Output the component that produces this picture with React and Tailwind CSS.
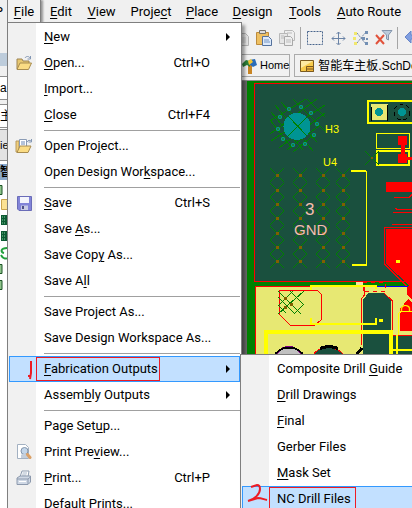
import { Fragment } from 'react';
import clsx from 'clsx';

const MENU_BAR = [
  { label: 'File', key: 0, width: 'w-[34px]', open: true },
  { label: 'Edit', key: 0, width: 'w-[40px]' },
  { label: 'View', key: 0, width: 'w-[41px]' },
  { label: 'Project', key: 5, width: 'w-[58px]' },
  { label: 'Place', key: 0, width: 'w-[44px]' },
  { label: 'Design', key: 0, width: 'w-[57px]' },
  { label: 'Tools', key: 0, width: 'w-[48px]' },
  { label: 'Auto Route', key: 0, width: 'w-[80px]' },
];

const FILE_MENU = [
  [
    { label: 'New', key: 0, submenu: true },
    { label: 'Open...', key: 0, shortcut: 'Ctrl+O', icon: 'open' },
    { label: 'Import...', key: 0 },
    { label: 'Close', key: 0, shortcut: 'Ctrl+F4' },
  ],
  [
    { label: 'Open Project...', key: 8, icon: 'openProject' },
    { label: 'Open Design Workspace...', key: 15 },
  ],
  [
    { label: 'Save', key: 0, shortcut: 'Ctrl+S', icon: 'save' },
    { label: 'Save As...', key: 5 },
    { label: 'Save Copy As...', key: 8 },
    { label: 'Save All', key: 6 },
  ],
  [
    { label: 'Save Project As...' },
    { label: 'Save Design Workspace As...' },
  ],
  [
    { label: 'Fabrication Outputs', key: 0, submenu: true, active: true, mark: 1 },
    { label: 'Assembly Outputs', key: 5, submenu: true },
  ],
  [
    { label: 'Page Setup...', key: 8 },
    { label: 'Print Preview...', key: 9, icon: 'preview' },
    { label: 'Print...', key: 0, shortcut: 'Ctrl+P', icon: 'print' },
    { label: 'Default Prints...' },
  ],
];

const FABRICATION_MENU = [
  [
    { label: 'Composite Drill Guide', key: 16 },
    { label: 'Drill Drawings', key: 0 },
    { label: 'Final', key: 0 },
    { label: 'Gerber Files' },
    { label: 'Mask Set', key: 0 },
    { label: 'NC Drill Files', active: true, mark: 2 },
  ],
];

function Label({ text, index }) {
  if (index === undefined) return <span>{text}</span>;
  return (
    <span>
      {text.slice(0, index)}
      <span className="underline underline-offset-2">{text[index]}</span>
      {text.slice(index + 1)}
    </span>
  );
}

const menuIcons = {
  open: (
    <svg width="16" height="16" viewBox="0 0 16 16">
      <path d="M1 14V4h5l1 2h6v3" fill="#e8c871" stroke="#9c8352" />
      <path d="M1 14.5 4 8h11.5l-3 6.5z" fill="#fbdc84" stroke="#a88c50" />
      <path d="M9 3c1-2 4-2 5 0M14.500 1v3h-3" fill="none" stroke="#8296b4" />
    </svg>
  ),
  openProject: (
    <svg width="18" height="16" viewBox="0 0 18 16">
      <path d="M1 14V3h3v11z" fill="#f0cf7d" stroke="#b89a5d" />
      <path d="M4.500 1.500h7v9h-7z" fill="#fff" stroke="#8a9bb5" />
      <path d="M6 4h4M6 6h4" stroke="#6b87b5" />
      <path d="M2 14.500 5 8h11l-3 6.500z" fill="#fbdc84" stroke="#a88c50" />
      <path d="M12 4c1-2 3-2 4-1M16.500 1v3h-3" fill="none" stroke="#8296b4" />
    </svg>
  ),
  save: (
    <svg width="15" height="15" viewBox="0 0 15 15">
      <path d="M.5.5h14v14H2l-1.500-1.500z" fill="#8284d8" stroke="#6a6cb8" />
      <path d="M3 1h9v6H3z" fill="#f4f5fc" />
      <path d="M4 9.500h7V14H4z" fill="#c9cce4" />
      <path d="M5 10h2v3H5z" fill="#4d4f86" />
    </svg>
  ),
  preview: (
    <svg width="16" height="16" viewBox="0 0 16 16">
      <path d="M1.500.5h8l3 3v11h-11z" fill="#fff" stroke="#a3b1c2" />
      <circle cx="8.500" cy="7" r="3.500" fill="#c3d6ea" stroke="#8294ab" />
      <path d="M5 11c2-2 6-2 7 0v3H5z" fill="#c4cedb" />
      <path d="m11.500 10.500 2.500 3" stroke="#dba066" strokeWidth="3" strokeLinecap="round" />
    </svg>
  ),
  print: (
    <svg width="16" height="16" viewBox="0 0 16 16">
      <path d="m4 7 2-6h7l-1 6z" fill="#fff" stroke="#8d9cb0" />
      <path d="M6.500 3h4.500M6 5h4.500" stroke="#a9b7c9" />
      <path d="m1 8 3-2h10.500v6L12 14.500H1z" fill="#cfd8e5" stroke="#8c99ad" />
      <path d="M1 9h11l2.500-2M12 9v5" fill="none" stroke="#8c99ad" />
      <path d="M3 11.500h7" stroke="#fff" />
    </svg>
  ),
};

// Red pen digits drawn beside the two steps
function PenMark({ step }) {
  if (step === 1) {
    return (
      <svg width="8" height="20" viewBox="0 0 8 20" fill="none" stroke="#ed1c24" strokeWidth="2">
        <path d="M5 1v12l-1 6M2 16h3" />
      </svg>
    );
  }
  return (
    <svg width="22" height="20" viewBox="0 0 22 20" fill="none" stroke="#ed1c24" strokeWidth="2">
      <path d="M4 3l6-2c2 0 3 1 3 4 0 5-5 10-12 12l10-3c3 0 5 1 9 2" />
    </svg>
  );
}

function MenuRow({ item }) {
  return (
    <li role="none">
      <button
        type="button"
        role="menuitem"
        className={clsx(
          'relative flex h-[26px] w-full items-center border text-left whitespace-nowrap',
          item.active ? 'border-[#3399ff] bg-[#c2e0ff]' : 'border-transparent'
        )}
      >
        <span className="flex w-[26px] shrink-0 justify-center pl-[2px]">
          {item.icon && menuIcons[item.icon]}
        </span>
        <span
          className={clsx(
            'flex h-6 items-center border pl-[7px]',
            item.mark ? 'border-[#ed1c24]' : 'border-transparent',
            item.mark === 2 ? 'pr-1' : 'pr-px'
          )}
        >
          <Label text={item.label} index={item.key} />
        </span>
        {item.shortcut && <span className="ml-auto pr-[29px]">{item.shortcut}</span>}
        {item.submenu && (
          <svg className="mr-2 ml-auto" width="5" height="8" viewBox="0 0 5 8">
            <path d="M0 0v8l4-4z" />
          </svg>
        )}
        {item.mark && (
          <span className={clsx('absolute', item.mark === 1 ? 'top-[3px] left-4' : '-top-[3px] left-1')}>
            <PenMark step={item.mark} />
          </span>
        )}
      </button>
    </li>
  );
}

function Menu({ groups, label, className }) {
  return (
    <ul
      role="menu"
      aria-label={label}
      className={clsx(
        'absolute border border-[#7f7f7f] bg-[linear-gradient(to_right,#f1f1f1_28px,#ffffff_28px)] p-px shadow-[3px_3px_3px_#00000060]',
        className
      )}
    >
      {groups.map((group, i) => (
        <Fragment key={i}>
          {i > 0 && <li role="separator" className="my-[2px] ml-[35px] h-px bg-[#a0a0a0]" />}
          {group.map((item) => (
            <MenuRow key={item.label} item={item} />
          ))}
        </Fragment>
      ))}
    </ul>
  );
}

function ToolButton({ label, children }) {
  return (
    <button type="button" aria-label={label} className="flex h-6 w-[23px] shrink-0 items-center justify-center">
      <svg width="18" height="18" viewBox="0 0 18 18" fill="none">
        {children}
      </svg>
    </button>
  );
}

function Toolbar() {
  return (
    <div className="flex h-[30px] shrink-0 items-center overflow-hidden pl-1">
      <ToolButton label="Save">
        <path d="M.5 2.500h14v13H.5z" fill="#b4b6ec" stroke="#a3a5e0" />
      </ToolButton>
      <span className="w-[202px] shrink-0" />
      <ToolButton label="Copy">
        <path d="M7.500 4.500h6l3 3v9h-9z" fill="#e4e4e4" stroke="#b4b4b4" />
        <path d="M10 9h4M10 11h4M10 13h4" stroke="#c4c4c4" />
      </ToolButton>
      <ToolButton label="Paste">
        <path d="M1.500 3.500h12v12h-12z" fill="#eec062" stroke="#bd8b3c" />
        <path d="M4.500 1.500h6v3h-6z" fill="#dcdcdc" stroke="#7b7466" />
        <path d="M7.500 7.500h6l3 3v6h-9z" fill="#dce9fa" stroke="#54719c" />
        <path d="M9 11h5M9 13h6" stroke="#7796c4" />
      </ToolButton>
      <ToolButton label="Rubber stamp">
        <path d="M6.500 1.500h8l2 2v8h-10z" fill="#eee" stroke="#b8b8b8" />
        <path d="M1.500 4.500h8v10h-8z" fill="#e6e6e6" stroke="#b8b8b8" />
        <path d="M6.500 7.500h6l2 2v7h-8z" fill="#eee" stroke="#a8a8a8" />
        <path d="M8 11h5M8 13h5M3 7h3M3 9h3M9 4h5" stroke="#bbb" />
      </ToolButton>
      <span className="mx-[2px] h-[22px] w-px shrink-0 bg-[#a5a5a5]" />
      <ToolButton label="Select area">
        <path d="M1.500 2.500h15v13h-15z" stroke="#48658c" strokeDasharray="2 1" />
      </ToolButton>
      <ToolButton label="Move">
        <path d="M9.500 3v12M3 9.500h13M7.500 5l2-2 2 2M7.500 14l2 2 2-2M5 7.500l-2 2 2 2M14 7.500l2 2-2 2" stroke="#6a83a6" />
      </ToolButton>
      <ToolButton label="Deselect">
        <path d="m5 4 8 10M5 14l8-10" stroke="#6f86a5" strokeDasharray="2 1" />
        <path d="M2 3h3v3H2zM1 8h3v3H1zM2 13h3v3H2z" fill="#f1e86d" />
        <path d="M13 2h3v3h-3zM10 8h3v3h-3zM14 9h2v2h-2zM13 13h3v3h-3z" fill="#7390b4" />
      </ToolButton>
      <ToolButton label="Clear filter">
        <path d="m1 6 8 9M9 6l-8 9" stroke="#e1523b" strokeWidth="2" />
        <path d="M7 1.500h10L13.500 6v5l-2-1V6z" fill="#bccbdc" stroke="#8496ad" />
      </ToolButton>
      <span className="mx-[2px] h-[22px] w-px shrink-0 bg-[#a5a5a5]" />
      <ToolButton label="Undo">
        <path d="m2 8 6-6v4c5 0 8 3 8 8-2-3-4-4-8-4v4z" fill="#7f9ee0" stroke="#6784c8" />
      </ToolButton>
    </div>
  );
}

function DocumentTabs() {
  return (
    <div className="flex h-7 shrink-0 items-start gap-1 overflow-hidden border-b border-[#8c8c8c] pt-px font-['Liberation_Sans','Noto_Sans_CJK_SC',sans-serif] text-[12px]">
      <button type="button" className="flex h-[23px] shrink-0 items-center gap-[2px] border border-l-0 border-[#ababab] bg-[#f1f1f1] pl-px text-[11px]">
        <svg width="16" height="16" viewBox="0 0 16 16">
          <path d="M6 5h4v11H6z" fill="#c98523" />
          <path d="m0 6 4-4 4 1v6l-3-2-4 2z" fill="#2e8138" />
          <path d="m7 2 6-1 2 6-4 2-4-3z" fill="#2b6cb8" />
          <path d="m6 3 3-2 2 3-4 3z" fill="#f4c631" />
        </svg>
        Home
      </button>
      <button type="button" className="flex h-[23px] shrink-0 items-center gap-1 border border-[#ababab] bg-[#f1f1f1] px-[5px] whitespace-nowrap">
        <svg width="14" height="12" viewBox="0 0 14 12">
          <path d="M.5.5h13v11H.5z" fill="#f7cb4c" stroke="#7a5a20" />
          <path d="M1 1h12L1 8z" fill="#fdeaa2" />
          <path d="M6.500 6.500h7v5h-7zM7 9h6" fill="#f1b53a" stroke="#7a5a20" />
        </svg>
        智能车主板.SchDoc
      </button>
    </div>
  );
}

const HATCH_COLUMNS = [277, 300, 323, 343];
const HATCH_ROWS = [175, 190, 204, 218, 233, 247, 261];
const VIA_RING = [
  [301, 107], [289, 109], [280, 117], [278, 129], [283, 139],
  [293, 145], [305, 144], [314, 135], [317, 124], [311, 113],
];

function Board() {
  return (
    <svg
      role="img"
      aria-label="PCB layout"
      className="block min-h-0 w-full flex-1"
      viewBox="241 81 171 427"
      preserveAspectRatio="xMinYMin slice"
      fill="none"
      shapeRendering="crispEdges"
    >
      <path d="M241 81h6v427h-6z" fill="#696969" />
      <path d="M247 81h400v427H247z" fill="#008000" />
      <path d="M254.500 83.500h400v198h-400z" fill="#1a503e" stroke="#f00" />
      <path d="M255.500 286.500h400V508h-400z" fill="#e7e873" stroke="#f00" />

      {/* mounting hole H3 */}
      <g stroke="#008000">
        <path d="m270 121 36-22M270 134l47-35M271 141l54-36M279 148l46-35M287 150l32-24M293 152l21-17" />
        <path d="m293 99 32 32M281 102l36 40M275 105l38 46M271 112l32 38M270 120l22 28M307 99l18 18" />
      </g>
      <circle cx="297" cy="126.500" r="13.500" fill="#009494" />
      <path d="m288 116 19 20M287 137l20-20" stroke="#008000" />
      {VIA_RING.map(([x, y]) => (
        <g key={`${x}-${y}`}>
          <circle cx={x} cy={y} r="2.500" fill="#009494" />
          <path d={`M${x - 2} ${y - 2}l4 4m0-4l-4 4`} stroke="#1a803e" />
        </g>
      ))}

      {/* U4 pad hatching */}
      {HATCH_COLUMNS.map((x) =>
        HATCH_ROWS.map((y) => (
          <g key={`${x}-${y}`}>
            <path d={`M${x - 7} ${y - 7}l14 14m0-14l-14 14`} stroke="#008000" />
            <path d={`M${x - 1} ${y - 1}h3v3h-3z`} fill="#806000" />
          </g>
        ))
      )}
      <path d="M351 171h15.500v94H352" stroke="#ff0" />
      <path d="M351 171h15M352 265h15" stroke="#ff0" strokeWidth="2" />

      <g className="font-['Liberation_Sans',sans-serif]" shapeRendering="auto">
        <text x="325" y="133" fontSize="11" fill="#ff0">H3</text>
        <text x="323" y="166" fontSize="11" fill="#ff0">U4</text>
        <text x="305" y="215" fontSize="17" fill="#f5bdb0">3</text>
        <text x="294" y="235" fontSize="15" fill="#f5bdb0">GND</text>
      </g>

      {/* header and resistors */}
      <path d="M430 101h-62v22h62" stroke="#ff0" strokeWidth="2" />
      <path d="M371 104h17v16h-17z" fill="#e7e873" />
      <path d="M371.500 107v14M387.500 105v16" stroke="#000" />
      <circle cx="379" cy="112" r="4" fill="#009494" />
      <circle cx="402" cy="112" r="8" stroke="#000" strokeDasharray="4 3" />
      <circle cx="402" cy="112" r="4" fill="#009494" />
      <path d="M376.500 133.500h33v15h-33z" stroke="#ff0" />
      <path d="M377 151h32v14h-32z" stroke="#ff0" strokeWidth="2" />
      <path d="M398 136h9v9h-9zM398 154h9v9h-9zM401 145h4v9h-4zM407 157h20v3h-20z" fill="#f00" />
      <path d="m365 151 14 14m0-14-14 14" stroke="#008000" />
      <path d="M371 157h2v2h-2z" fill="#806000" />

      {/* right hand copper */}
      <path d="M386 182h40v10h-40z" fill="#f00" />
      <path d="M394 197.500h15l3-3M395 208l2 1.500h20M393 212.500h30M392 224.500h30M384.500 264v-37h40" stroke="#f00" />
      <path d="M386 229h34v67l-10-10-24-22z" fill="#f00" />
      <path d="m384.500 264 24 24" stroke="#f00" />
      <path d="M396 260h4v3h-4z" fill="#ff0" />

      {/* lower area */}
      <path d="M256 282h98v4h-98z" fill="#008000" />
      <path d="M356 282h7v5h-7z" fill="#f2e5a0" />
      <path d="M365 286.500h45" stroke="#00f" />
      <path d="M363 287h49v6h-49z" fill="#e7e873" />
      <path d="M363.500 291v-8.500h22v8.500z" stroke="#f00" strokeDasharray="4 4" />
      <path d="M363 360v-61l3-3v-1l2-2h15l8 8v34h21v25z" fill="#1a503e" />
      <path d="M361.500 345v-46l3-4v-9M384 293l8.500 8v34h20" stroke="#f00" />
      <path d="m407 287 5-5v17l-5-4zM400 309l8-10 4 4v28h-12z" fill="#f00" />
      <path d="M398 335v-21l4-3h10" stroke="#ff0" />
      <path d="M279.500 290.500h38l4 4v25l-7 6h-24l-11-11z" stroke="#f00" />
      <path d="m278 291 23 23M290 291l14 14M278 305l8 8M304 291l-26 23M293 291l-15 15M304 304l-9 9M278 297l17 17" stroke="#008000" />
      <path d="M284 297h3v3h-3zM284 306h3v3h-3zM290 303h3v3h-3z" fill="#806000" />
      <path d="M310.500 290v-4.500h65v3M310.500 318v5.500h65v-6" stroke="#ff0" strokeWidth="2" />
      <circle cx="381" cy="320.500" r="2" fill="#ff0" />
      <circle cx="289" cy="361" r="14" fill="#c0c0c0" stroke="#800080" strokeWidth="2" />
      <path d="M273 358c6-14 26-14 32 0" stroke="#000" strokeWidth="2" />
      <path d="M312 358c4-14 28-14 33 0z" fill="#1a503e" stroke="#f00" />
      <path d="M320 349c4-3 14-3 18 0M354 358l8-10" stroke="#000" strokeWidth="3" />
      <path d="M266 358v-26h125v26" stroke="#ff0" strokeWidth="4" />
      <path d="M397 335v20M391 350h25" stroke="#ff0" strokeWidth="2" />
      <text
        x="-313"
        y="410"
        fontSize="12"
        fill="#ff0"
        transform="rotate(-90)"
        className="font-['Liberation_Sans',sans-serif]"
      >
        D
      </text>
    </svg>
  );
}

// Projects panel, mostly behind the open File menu
function ProjectsPanel() {
  return (
    <aside className="flex w-[241px] shrink-0 flex-col bg-white font-['Liberation_Sans','Noto_Sans_CJK_SC',sans-serif] text-[12px] whitespace-nowrap">
      <div className="h-[13px] bg-[#bdccdb]" />
      <div className="h-[10px] bg-[#f0f0f0]" />
      <div className="flex h-6 items-center border-y border-[#8f8f8f] bg-white">a</div>
      <div className="h-1 bg-[#f0f0f0]" />
      <div className="flex h-6 items-center border-y border-[#8f8f8f] bg-white">主</div>
      <div className="mt-px flex h-8 items-center border-y border-[#8f8f8f] bg-[#e3e3e3] text-[11px]">ie</div>
      <div className="mt-[3px] flex h-4 items-center bg-[#8ba9cb] font-bold">智</div>
      <svg className="shrink-0" width="7" height="116" viewBox="0 0 7 116">
        <path d="M-1 5.500h3v9h-3zM-1 84.500h3v9h-3zM-1 100.500h3v9h-3z" fill="#8fc48b" stroke="#1d5427" />
        <path d="M1.500 19.500h8v10h-8z" fill="#fbe294" stroke="#c9a44d" />
        <path d="M1 35h6v10H1zM1 51h6v10H1z" fill="#0d5a33" />
        <path d="M2 37h4M2 40h4M2 43h4M2 53h4M2 56h4M2 59h4" stroke="#7fd09a" strokeDasharray="1 1" />
        <path d="M7 68c-6 0-7 4-3 5M1 75c2 4 5 4 6 3" fill="none" stroke="#22a03c" strokeWidth="2" />
      </svg>
    </aside>
  );
}

function App() {
  return (
    <div className="relative flex h-screen flex-col overflow-hidden bg-[#f0f0f0] font-['Roboto','Noto_Sans_CJK_SC',sans-serif] text-[13px] text-black">
      <nav aria-label="Main menu" className="flex h-[23px] shrink-0">
        <span className="flex w-[7px] shrink-0 items-center justify-end overflow-hidden pr-1">P</span>
        {MENU_BAR.map((item) => (
          <button
            key={item.label}
            type="button"
            className={clsx(
              'flex shrink-0 items-center justify-center border-x whitespace-nowrap',
              item.width,
              item.open ? 'border-[#7f7f7f] bg-[#f2f2f2] shadow-[2px_0_2px_#00000060]' : 'border-transparent'
            )}
          >
            <Label text={item.label} index={item.key} />
          </button>
        ))}
      </nav>
      <Toolbar />
      <div className="flex min-h-0 flex-1">
        <ProjectsPanel />
        <main className="flex min-w-0 flex-1 flex-col">
          <DocumentTabs />
          <Board />
        </main>
      </div>
      <Menu groups={FILE_MENU} label="File" className="top-[22px] left-[7px] w-[235px]" />
      <Menu groups={FABRICATION_MENU} label="Fabrication Outputs" className="top-[354px] left-[240px] w-[235px]" />
    </div>
  );
}

export default App;
